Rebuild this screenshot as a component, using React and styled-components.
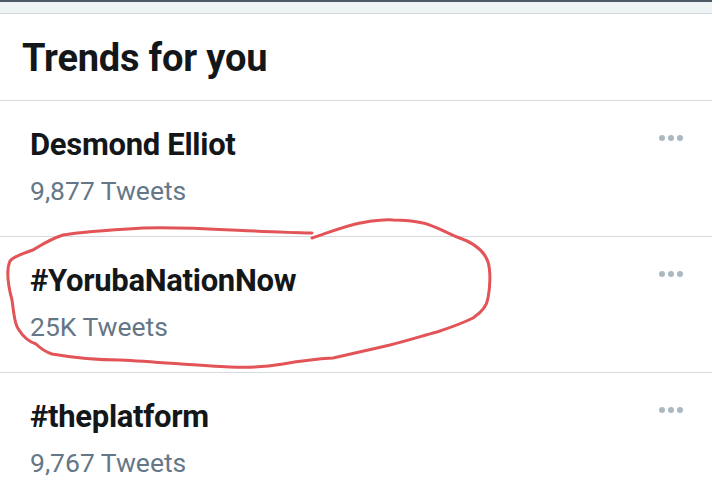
import styled, { createGlobalStyle } from "styled-components";

const trends = [
  { id: 1, name: "Desmond Elliot", count: "9,877 Tweets" },
  { id: 2, name: "#YorubaNationNow", count: "25K Tweets", circled: true },
  { id: 3, name: "#theplatform", count: "9,767 Tweets" },
];

export default function App() {
  return (
    <>
      <GlobalStyle />
      <StyledPage>
        <StyledTopBar />
        <StyledHeader>
          <StyledHeadline>Trends for you</StyledHeadline>
        </StyledHeader>
        <StyledList>
          {trends.map((trend) => (
            <StyledRow key={trend.id}>
              <StyledTrendText>
                <StyledTrendName>{trend.name}</StyledTrendName>
                <StyledTrendCount>{trend.count}</StyledTrendCount>
              </StyledTrendText>
              <StyledMore aria-label="more">
                <span />
                <span />
                <span />
              </StyledMore>
              {trend.circled && <Scribble />}
            </StyledRow>
          ))}
        </StyledList>
      </StyledPage>
    </>
  );
}

// hand drawn red loop around the second trend
function Scribble() {
  return (
    <StyledScribble viewBox="0 0 712 136" width="712" height="136">
      <g transform="translate(0 -237)">
        <path
          d="M312 233 C 250 232, 190 226, 143 228 C 110 230, 80 232, 63 235
             C 48 240, 40 246, 33 250 C 22 254, 14 256, 10 261
             C 6 270, 8 285, 12 300 C 14 315, 15 325, 19 330
             C 24 338, 30 342, 36 344 C 42 350, 46 352, 52 354
             C 75 358, 100 360, 120 360 C 160 362, 200 366, 230 367
             C 250 368, 265 367, 283 364 C 300 361, 315 359, 333 358
             C 355 353, 372 349, 390 345 C 410 340, 425 335, 437 332
             C 455 326, 465 322, 473 318 C 482 312, 487 306, 488 298
             C 490 288, 491 272, 488 262 C 484 250, 472 242, 457 237
             C 445 232, 433 225, 423 223 C 410 220, 400 220, 393 220
             C 383 219, 372 221, 360 223 C 345 226, 330 232, 312 238"
          fill="none"
          stroke="#e25457"
          strokeWidth="3"
          strokeLinecap="round"
          strokeLinejoin="round"
        />
      </g>
    </StyledScribble>
  );
}

const GlobalStyle = createGlobalStyle`
  html, body {
    margin: 0;
    padding: 0;
    background: #ffffff;
  }
  body {
    font-family: Roboto, "Noto Sans", Arial, sans-serif;
  }
`;

const StyledPage = styled.div`
  width: 712px;
  height: 500px;
  overflow: hidden;
  background: #ffffff;
`;

const StyledTopBar = styled.div`
  height: 11px;
  background: #eef3f6;
  border-top: 2px solid #4d5964;
  border-bottom: 1px solid #d3dbe0;
`;

const StyledHeader = styled.header`
  height: 87px;
  box-sizing: border-box;
  padding: 22px 0 0 22px;
  border-bottom: 1px solid #d6dade;
`;

const StyledHeadline = styled.h2`
  margin: 0;
  font-size: 38px;
  line-height: 44px;
  font-weight: 700;
  color: #14171a;
  letter-spacing: -0.2px;
`;

const StyledList = styled.ul`
  margin: 0;
  padding: 0;
  list-style: none;
`;

const StyledRow = styled.li`
  position: relative;
  height: 136px;
  box-sizing: border-box;
  display: flex;
  justify-content: space-between;
  align-items: flex-start;
  padding: 26px 29px 0 30px;
  border-bottom: 1px solid #d6dade;
`;

const StyledTrendText = styled.div`
  display: flex;
  flex-direction: column;
`;

const StyledTrendName = styled.span`
  font-size: 31px;
  line-height: 36px;
  font-weight: 700;
  color: #14171a;
  letter-spacing: -0.3px;
`;

const StyledTrendCount = styled.span`
  margin-top: 12px;
  font-size: 26.5px;
  line-height: 32px;
  color: #657786;
`;

const StyledMore = styled.div`
  display: flex;
  gap: 3px;
  margin-top: 8px;

  span {
    width: 6px;
    height: 6px;
    border-radius: 50%;
    background: #aab8c2;
  }
`;

const StyledScribble = styled.svg`
  position: absolute;
  left: 0;
  top: 0;
  overflow: visible;
  pointer-events: none;
`;
